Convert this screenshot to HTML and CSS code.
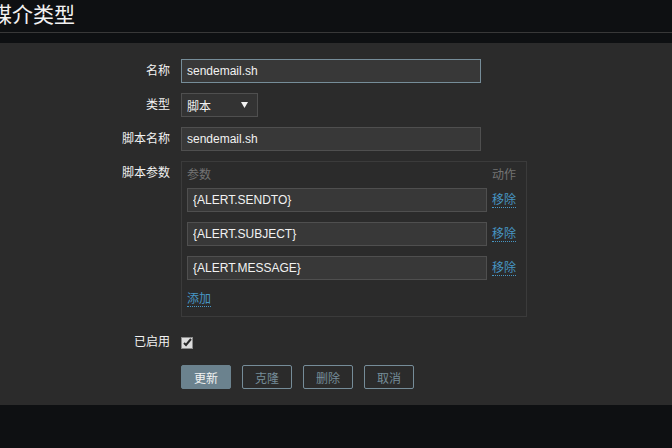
FILE: index.html
```html
<!DOCTYPE html>
<html lang="zh">
<head>
  <meta charset="UTF-8">
  <title>媒介类型</title>
  <link rel="stylesheet" href="styles.css">
</head>
<body>
  <div class="header">
    <h1>媒介类型</h1>
  </div>

  <div class="panel">
    <div class="row">
      <label class="label">名称</label>
      <input type="text" class="field wide focused" value="sendemail.sh">
    </div>
    <div class="row">
      <label class="label">类型</label>
      <div class="select">
        <span>脚本</span>
        <svg class="arrow" width="7" height="6" viewBox="0 0 7 6"><path d="M0 0h7L3.5 6z" fill="#f2f2f2"/></svg>
      </div>
    </div>
    <div class="row">
      <label class="label">脚本名称</label>
      <input type="text" class="field wide" value="sendemail.sh">
    </div>
    <div class="row params-row">
      <label class="label">脚本参数</label>
      <div class="params">
        <div class="params-head">参数</div>
        <div class="params-head">动作</div>

        <input type="text" class="field param" value="{ALERT.SENDTO}">
        <a class="link">移除</a>

        <input type="text" class="field param" value="{ALERT.SUBJECT}">
        <a class="link">移除</a>

        <input type="text" class="field param" value="{ALERT.MESSAGE}">
        <a class="link">移除</a>

        <div class="add"><a class="link">添加</a></div>
      </div>
    </div>
    <div class="row check-row">
      <label class="label">已启用</label>
      <span class="checkbox">
        <svg width="9" height="9" viewBox="0 0 9 9"><path d="M1 5l2 2 5-6" fill="none" stroke="#2b2b2b" stroke-width="2"/></svg>
      </span>
    </div>
    <div class="row buttons">
      <span class="label"></span>
      <button class="btn primary">更新</button>
      <button class="btn">克隆</button>
      <button class="btn">删除</button>
      <button class="btn">取消</button>
    </div>
  </div>
</body>
</html>
```

FILE: styles.css
```css
body {
  margin: 0;
  background: #0e1012;
  color: #f2f2f2;
  font-family: "Liberation Sans", "Noto Sans CJK SC", sans-serif;
  font-size: 12px;
}
.header {
  height: 32px;
  border-bottom: 1px solid #383838;
  margin-bottom: 10px;
  overflow: hidden;
}
.header h1 {
  margin: 0 0 0 -9px;
  font-size: 21px;
  font-weight: normal;
  line-height: 30px;
}
.panel {
  background: #2b2b2b;
  padding: 16px 0;
}
.row { display: flex; align-items: flex-start; margin-bottom: 10px; }
.label {
  width: 170px;
  padding-right: 11px;
  text-align: right;
  line-height: 24px;
  flex-shrink: 0;
}
.field {
  box-sizing: border-box;
  height: 24px;
  margin: 0;
  padding: 0 5px;
  background: #383838;
  border: 1px solid #4f4f4f;
  color: #f2f2f2;
  font-family: inherit;
  font-size: 12px;
  outline: none;
}
.wide { width: 300px; }
.focused { border-color: #768d99; }
.select {
  box-sizing: border-box;
  width: 77px;
  height: 24px;
  padding: 0 5px;
  display: flex;
  align-items: center;
  justify-content: space-between;
  background: #333333;
  border: 1px solid #4f4f4f;
}
.arrow { margin-right: 4px; }
.params-row { margin-bottom: 13px; }
.params {
  border: 1px solid #3b3b3b;
  padding: 5px 10px 9px 5px;
  display: grid;
  grid-template-columns: 300px auto;
  column-gap: 5px;
  row-gap: 10px;
  align-items: center;
}
.params-head { color: #737373; line-height: 16px; margin-bottom: -5px; }
.param { width: 300px; }
.link {
  color: #4796c4;
  border-bottom: 1px dotted #4796c4;
  line-height: 14px;
  justify-self: start;
  cursor: pointer;
}
.add { grid-column: 1 / 3; line-height: 16px; margin-top: 1px; }
.check-row { margin-bottom: 11px; align-items: center; }
.checkbox {
  box-sizing: border-box;
  width: 12px;
  height: 12px;
  margin-top: 1px;
  background: #dedede;
  border: 1px solid #8c8c8c;
  display: flex;
  align-items: center;
  justify-content: center;
}
.buttons { gap: 11px; margin-bottom: 0; }
.buttons .label { width: 170px; padding-right: 0; }
.btn {
  box-sizing: border-box;
  height: 24px;
  padding: 0 12px;
  background: transparent;
  border: 1px solid #768d99;
  border-radius: 2px;
  color: #768d99;
  font-family: inherit;
  font-size: 12px;
}
.btn.primary { background: #6b828e; border-color: #6b828e; color: #f2f2f2; }
```
